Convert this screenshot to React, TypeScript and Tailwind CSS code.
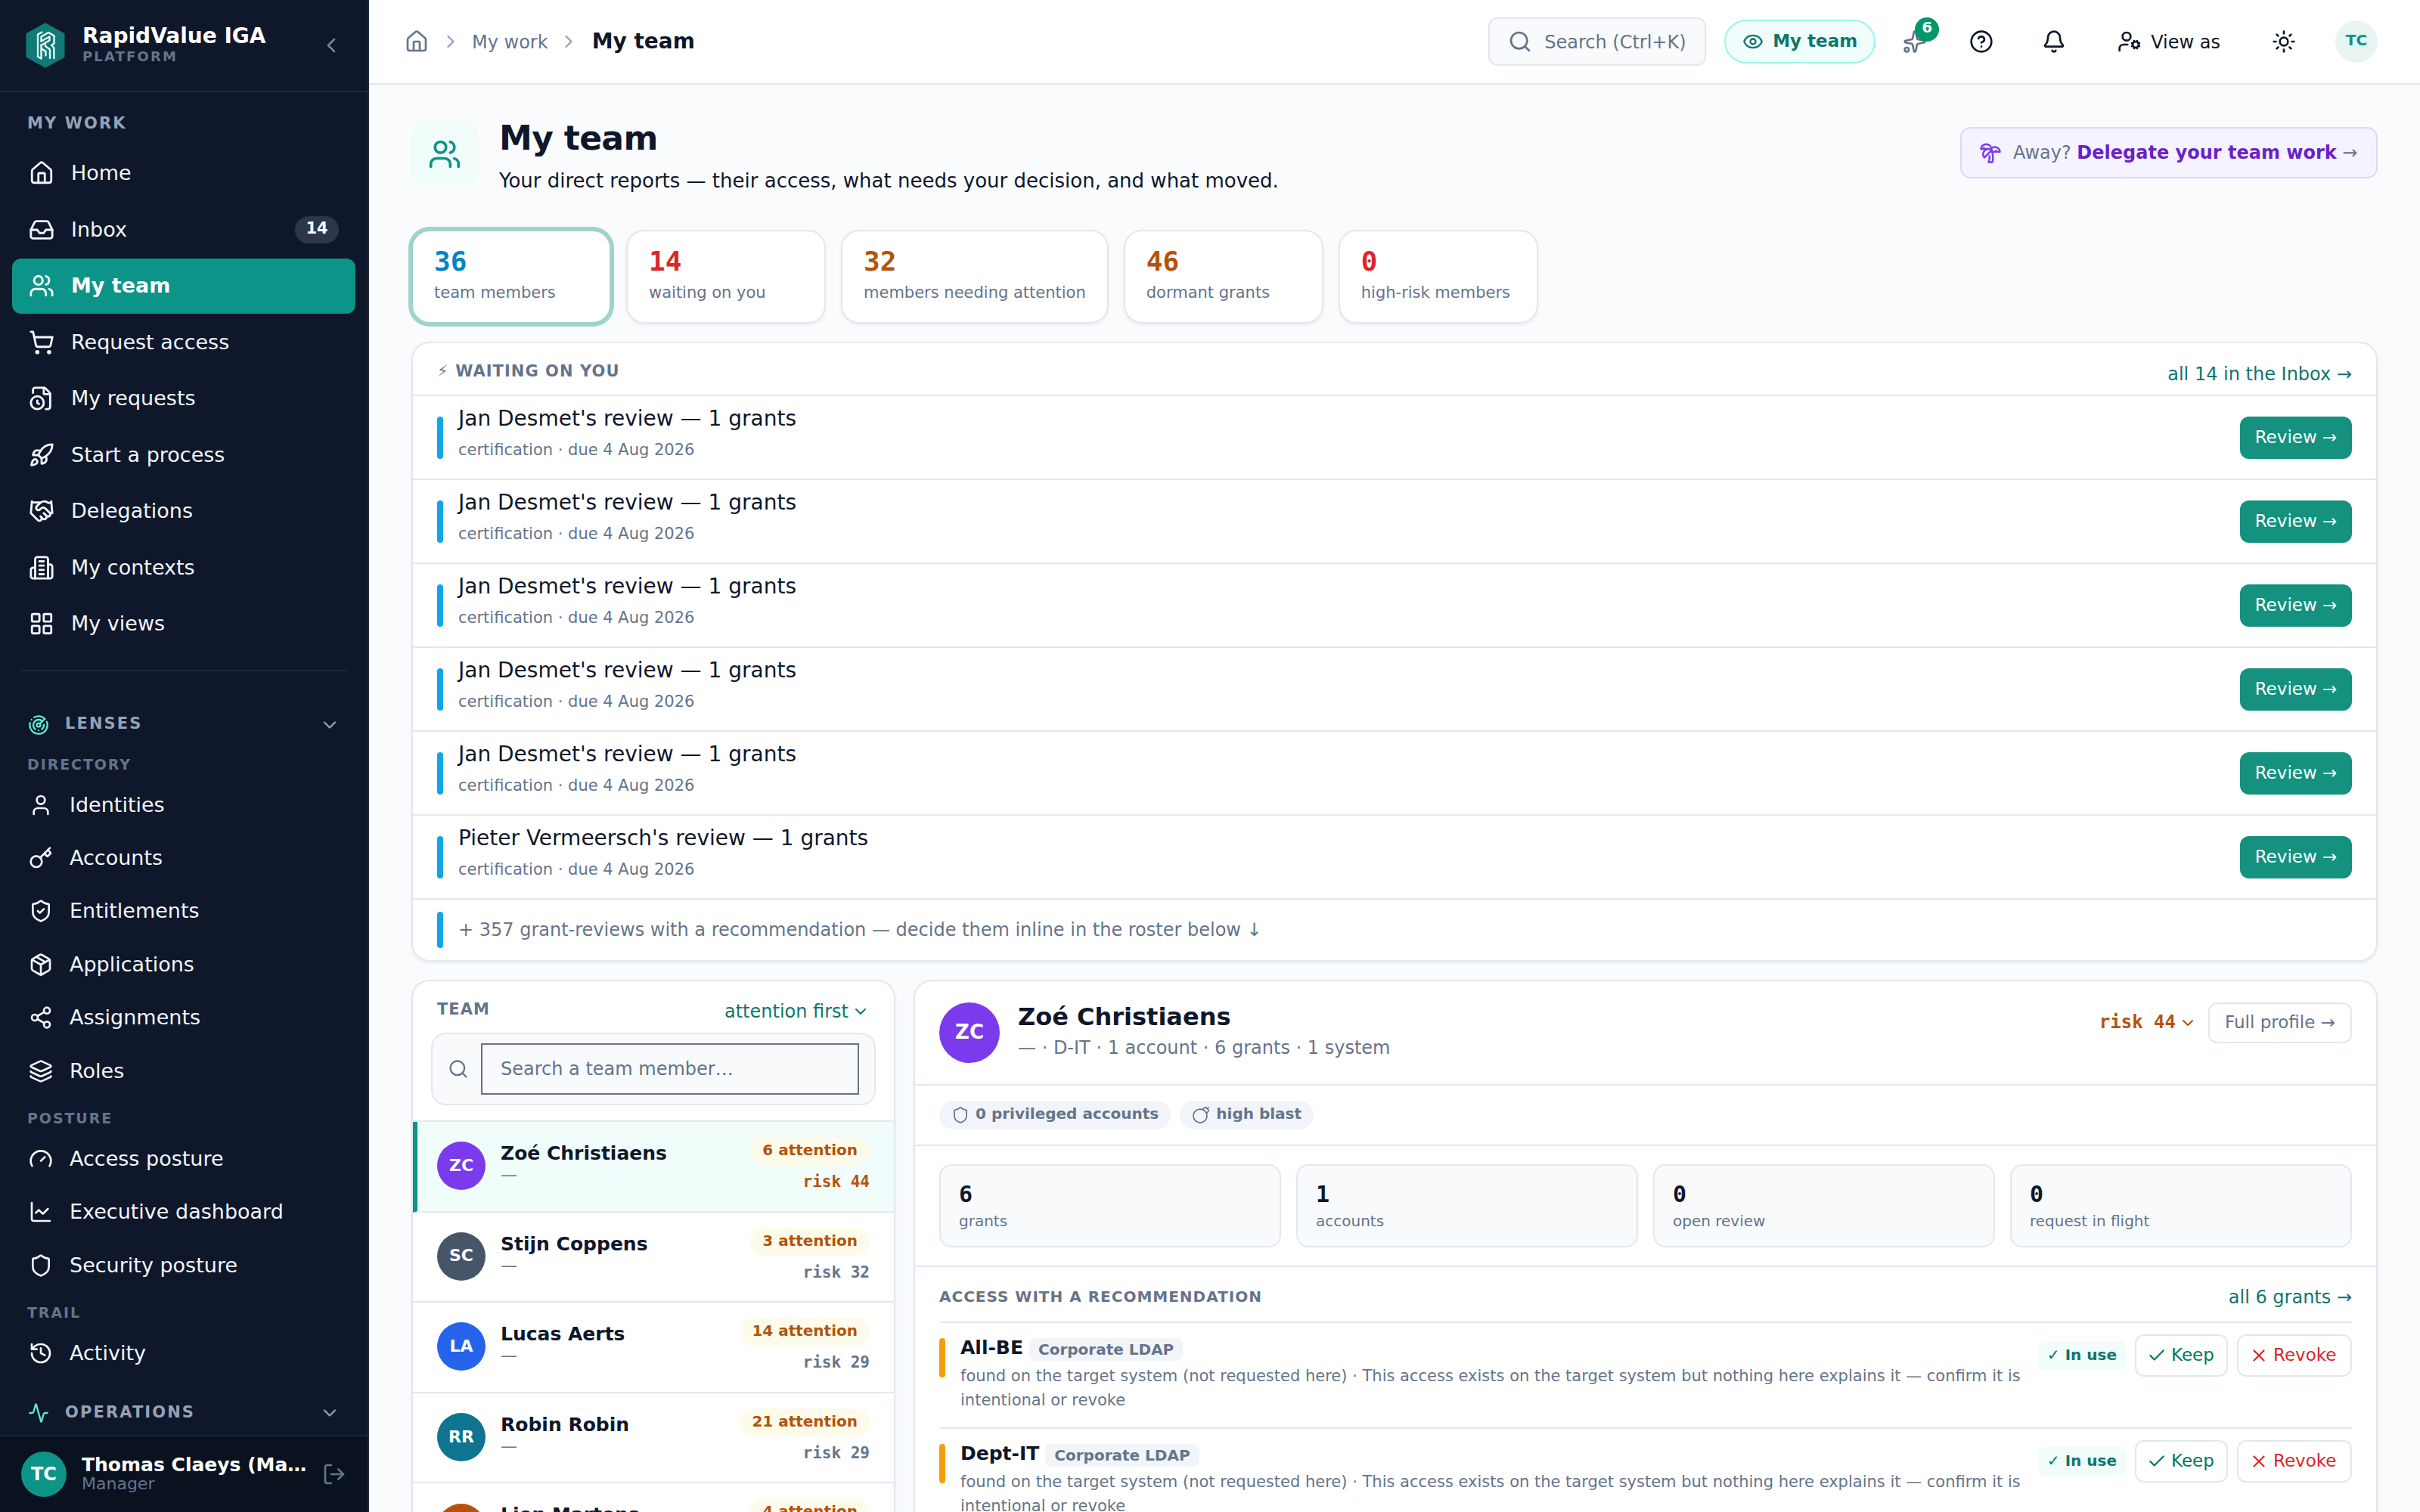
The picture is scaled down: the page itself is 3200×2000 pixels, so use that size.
import React from "react";
import {
  House, Inbox, Users, ShoppingCart, FileClock, Rocket, Handshake, LayoutGrid,
  Radar, User, Key, ShieldCheck, Package, Share2, Layers, Gauge, ChartLine, Shield, History,
  Activity, ChevronDown, ChevronLeft, ChevronRight, LogOut, Search, Eye, Sparkles, CircleHelp,
  Bell, UserCog, Sun, Bomb, Check, X, TreePalm,
} from "lucide-react";

type Icon = React.ComponentType<{ size?: number; strokeWidth?: number; className?: string }>;

function OfficeBuilding({ size = 24, strokeWidth = 2, className }: { size?: number; strokeWidth?: number; className?: string }) {
  return (
    <svg
      width={size}
      height={size}
      viewBox="0 0 24 24"
      fill="none"
      stroke="currentColor"
      strokeWidth={strokeWidth}
      strokeLinecap="round"
      strokeLinejoin="round"
      className={className}
    >
      <path d="M6 22V4a2 2 0 0 1 2-2h8a2 2 0 0 1 2 2v18Z" />
      <path d="M6 12H4a2 2 0 0 0-2 2v6a2 2 0 0 0 2 2h2" />
      <path d="M18 9h2a2 2 0 0 1 2 2v9a2 2 0 0 1-2 2h-2" />
      <path d="M10 6h4M10 10h4M10 14h4M10 18h4" />
    </svg>
  );
}

const workItems: { icon: Icon; label: string; badge?: string; active?: boolean }[] = [
  { icon: House, label: "Home" },
  { icon: Inbox, label: "Inbox", badge: "14" },
  { icon: Users, label: "My team", active: true },
  { icon: ShoppingCart, label: "Request access" },
  { icon: FileClock, label: "My requests" },
  { icon: Rocket, label: "Start a process" },
  { icon: Handshake, label: "Delegations" },
  { icon: OfficeBuilding, label: "My contexts" },
  { icon: LayoutGrid, label: "My views" },
];

const lensGroups: { title: string; items: { icon: Icon; label: string }[] }[] = [
  {
    title: "DIRECTORY",
    items: [
      { icon: User, label: "Identities" },
      { icon: Key, label: "Accounts" },
      { icon: ShieldCheck, label: "Entitlements" },
      { icon: Package, label: "Applications" },
      { icon: Share2, label: "Assignments" },
      { icon: Layers, label: "Roles" },
    ],
  },
  {
    title: "POSTURE",
    items: [
      { icon: Gauge, label: "Access posture" },
      { icon: ChartLine, label: "Executive dashboard" },
      { icon: Shield, label: "Security posture" },
    ],
  },
  { title: "TRAIL", items: [{ icon: History, label: "Activity" }] },
];

const stats = [
  { value: "36", label: "team members", color: "text-[#0284c7]", active: true },
  { value: "14", label: "waiting on you", color: "text-[#dc2626]" },
  { value: "32", label: "members needing attention", color: "text-[#b45309]" },
  { value: "46", label: "dormant grants", color: "text-[#b45309]" },
  { value: "0", label: "high-risk members", color: "text-[#dc2626]" },
];

const reviews = [
  "Jan Desmet's review — 1 grants",
  "Jan Desmet's review — 1 grants",
  "Jan Desmet's review — 1 grants",
  "Jan Desmet's review — 1 grants",
  "Jan Desmet's review — 1 grants",
  "Pieter Vermeersch's review — 1 grants",
];

const members = [
  { initials: "ZC", name: "Zoé Christiaens", attention: 6, risk: 44, bg: "bg-[#7c3aed]", active: true },
  { initials: "SC", name: "Stijn Coppens", attention: 3, risk: 32, bg: "bg-[#475569]" },
  { initials: "LA", name: "Lucas Aerts", attention: 14, risk: 29, bg: "bg-[#2563eb]" },
  { initials: "RR", name: "Robin Robin", attention: 21, risk: 29, bg: "bg-[#0e7490]" },
  { initials: "LM", name: "Lien Martens", attention: 4, risk: 28, bg: "bg-[#b45309]" },
];

const facts = [
  { value: "6", label: "grants" },
  { value: "1", label: "accounts" },
  { value: "0", label: "open review" },
  { value: "0", label: "request in flight" },
];

function Logo() {
  return (
    <svg viewBox="0 0 52 60" className="h-[60px] w-[52px] shrink-0" fill="none">
      <path
        d="M26 1.500 50.500 15V45L26 58.500 1.500 45V15Z"
        fill="#107a76"
        stroke="#107a76"
        strokeWidth="2"
        strokeLinejoin="round"
      />
      <g stroke="#f0fdfa" strokeWidth="2.300" strokeLinejoin="round" strokeLinecap="round">
        <path d="M21.500 12.500 16 15.500V45L20.500 47.500V29.500" />
        <path d="M20.500 24.500V18.500L30 13 37.500 17.300V27.500L34 30 37.300 33V47" />
        <path d="M20.500 24.500 31.500 18.500V23.500L20.500 29.800" />
        <path d="M26 27.500V31L32 35.500V47" />
        <path d="M21 34.500 26.500 38V43.500" />
      </g>
    </svg>
  );
}

function Sidebar() {
  return (
    <aside className="flex h-[2000px] w-[488px] shrink-0 flex-col border-r-2 border-[#1e293b] bg-[#0f172a] text-[#f1f5f9]">
      <div className="flex h-[122px] shrink-0 items-center border-b-2 border-[#222b3d] pl-[34px] pr-[32px]">
        <Logo />
        <div className="ml-[23px] flex-1 pb-[5px]">
          <div className="text-[28px] font-bold leading-[34px] text-white">RapidValue IGA</div>
          <div className="text-[18px] font-bold leading-[20px] tracking-[0.12em] text-[#64748b]">PLATFORM</div>
        </div>
        <ChevronLeft size={32} className="text-[#76829a]" />
      </div>

      <div className="flex min-h-0 flex-1 flex-col overflow-hidden">
        <div className="mt-[25px] pl-[36px] text-[21px] font-bold leading-[32px] tracking-[0.1em] text-[#94a3b8]">MY WORK</div>
        <nav className="mt-[14px] flex flex-col gap-[2px] px-4">
          {workItems.map(({ icon: I, label, badge, active }) => (
            <div
              key={label}
              className={
                active
                  ? "flex h-[72.500px] items-center rounded-[12px] bg-[#0d9488] pl-[22px] pr-[22px] font-bold text-white"
                  : "flex h-[72.500px] items-center rounded-[12px] pl-[22px] pr-[22px]"
              }
            >
              <I size={34} />
              <span className="ml-[22px] flex-1 text-[27px] leading-[40px]">{label}</span>
              {badge && (
                <span className="flex h-[36px] w-[58px] items-center justify-center rounded-full bg-[#2e364a] pb-[2px] text-[21px] font-bold text-white">
                  {badge}
                </span>
              )}
            </div>
          ))}
        </nav>
        <div className="ml-[28px] mr-[28px] mt-[24px] h-[2px] shrink-0 bg-[#222b3d]" />

        <div className="mt-[54px] flex h-[34px] shrink-0 items-center pl-[37px] pr-[36px]">
          <Radar size={28} className="text-[#5eead4]" />
          <span className="ml-[21px] flex-1 pb-[3px] text-[21px] font-bold leading-[32px] tracking-[0.1em] text-[#94a3b8]">LENSES</span>
          <ChevronDown size={28} className="text-[#94a3b8]" />
        </div>
        <div className="mt-[8px] shrink-0">
          {lensGroups.map((g) => (
            <div key={g.title}>
              <div className="h-[46px] pl-[36px] pt-[12px] text-[19px] font-bold leading-[30px] tracking-[0.1em] text-[#64748b]">{g.title}</div>
              <div className="flex flex-col">
                {g.items.map(({ icon: I, label }) => (
                  <div key={label} className="flex h-[70.400px] items-center pl-[38px]">
                    <I size={32} />
                    <span className="ml-[22px] text-[27px] leading-[40px]">{label}</span>
                  </div>
                ))}
              </div>
            </div>
          ))}
        </div>
        <div className="mt-[27px] flex h-[34px] shrink-0 items-center pl-[37px] pr-[36px]">
          <Activity size={28} className="text-[#5eead4]" />
          <span className="ml-[21px] flex-1 pb-[3px] text-[21px] font-bold leading-[32px] tracking-[0.1em] text-[#94a3b8]">OPERATIONS</span>
          <ChevronDown size={28} className="text-[#94a3b8]" />
        </div>
      </div>

      <div className="flex h-[102px] shrink-0 items-center border-t-2 border-[#1a2436] bg-[#0a121f] pl-[28px] pr-[28px]">
        <div className="flex size-[60px] items-center justify-center rounded-full bg-[#0d9488] pb-[1px] text-[24px] font-bold text-white">TC</div>
        <div className="ml-[20px] w-[304px] pb-[5px]">
          <div className="truncate text-[25px] font-bold leading-[31px] text-white">Thomas Claeys (Manager)</div>
          <div className="text-[22px] leading-[20px] text-[#64748b]">Manager</div>
        </div>
        <LogOut size={32} className="ml-auto text-[#64748b]" />
      </div>
    </aside>
  );
}

function TopBar() {
  return (
    <header className="flex h-[112px] shrink-0 items-center border-b-2 border-[#e2e8f0] bg-white pl-[47px] pr-[56px]">
      <House size={32} className="text-[#64748b]" />
      <ChevronRight size={28} className="ml-[15px] text-[#94a3b8]" />
      <span className="ml-[14px] pt-[1px] text-[24px] text-[#64748b]">My work</span>
      <ChevronRight size={28} className="ml-[13px] text-[#94a3b8]" />
      <span className="ml-[17px] text-[28px] font-bold">My team</span>

      <div className="ml-auto flex h-[64px] w-[288px] items-center rounded-[12px] border-2 border-[#e2e8f0] bg-[#f8fafc] pl-[24px] text-[24px] text-[#64748b]">
        <Search size={32} />
        <span className="ml-[16px] pt-[1px]">Search (Ctrl+K)</span>
      </div>
      <div className="ml-[24px] flex h-[58px] w-[200px] items-center rounded-full border-2 border-[#99f6e4] bg-[#f0fdfa] pl-[22px] text-[23px] font-bold text-[#0f766e]">
        <Eye size={28} />
        <span className="ml-[12px] pb-[2px]">My team</span>
      </div>
      <div className="relative ml-[36px]">
        <Sparkles size={32} className="text-[#64748b]" />
        <span className="absolute -right-[16px] -top-[16px] flex size-[32px] items-center justify-center rounded-full bg-[#059669] pb-[6px] text-[20px] font-bold leading-none text-white">6</span>
      </div>
      <CircleHelp size={32} className="ml-[56px]" />
      <Bell size={32} className="ml-[64px]" />
      <UserCog size={32} className="ml-[68px]" />
      <span className="ml-[12px] pt-[1px] text-[24px]">View as</span>
      <Sun size={32} className="ml-[68px]" />
      <span className="ml-[52px] flex size-[56px] items-center justify-center rounded-full bg-[#e7f4f2] pb-[4px] text-[20px] font-bold text-[#0d9488]">TC</span>
    </header>
  );
}

function PageHeader() {
  return (
    <div className="flex h-[88px] items-center">
      <div className="flex size-[88px] items-center justify-center rounded-[20px] bg-[#f0fdfa] text-[#0d9488]">
        <Users size={44} />
      </div>
      <div className="ml-[28px] pt-[8px]">
        <h1 className="text-[44px] font-bold leading-[54px] tracking-[-0.015em]">My team</h1>
        <p className="mt-[8px] text-[26px] leading-[42px]">Your direct reports — their access, what needs your decision, and what moved.</p>
      </div>
      <div className="mb-[4px] ml-auto flex h-[68px] w-[552px] items-center rounded-[14px] border-2 border-[#ddd6fe] bg-[#f5f3ff] pl-[23px] text-[24px] text-[#64748b]">
        <TreePalm size={30} className="text-[#7c3aed]" />
        <span className="ml-[15px] whitespace-nowrap">
          Away? <b className="text-[#6b21c8]">Delegate your team work</b> →
        </span>
      </div>
    </div>
  );
}

function StatCards() {
  return (
    <div className="mt-[56px] flex gap-5">
      {stats.map((s) => (
        <div
          key={s.label}
          className={
            s.active
              ? "h-[124px] min-w-[264px] rounded-[24px] border-2 border-[#9fd3cb] bg-white px-[28px] pt-[20px] ring-4 ring-[#9fd3cb]"
              : "h-[124px] min-w-[264px] rounded-[24px] border-2 border-[#e2e8f0] bg-white px-[28px] pt-[20px] shadow-[0_2px_4px_rgba(15,23,42,0.06)]"
          }
        >
          <div className={`font-[DejaVu_Sans_Mono] text-[36px] font-bold leading-[40px] ${s.color}`}>{s.value}</div>
          <div className="mt-[5px] text-[21px] leading-[32px] text-[#64748b]">{s.label}</div>
        </div>
      ))}
    </div>
  );
}

function WaitingPanel() {
  return (
    <section className="mt-[24px] h-[820px] overflow-hidden rounded-[24px] border-2 border-[#e2e8f0] bg-white shadow-[0_2px_4px_rgba(15,23,42,0.06)]">
      <div className="flex h-[68px] items-center justify-between px-[32px] pt-[8px]">
        <h2 className="text-[21px] font-bold tracking-[0.05em] text-[#64748b]">⚡ WAITING ON YOU</h2>
        <span className="pt-[5px] text-[24px] text-[#0f766e]">all 14 in the Inbox →</span>
      </div>
      {reviews.map((title, i) => (
        <div key={i} className="flex h-[111.080px] items-center border-t-2 border-[#e2e8f0] px-[32px]">
          <div className="h-[56px] w-[8px] rounded-[4px] bg-[#0ea5e9]" />
          <div className="ml-[20px] flex-1 self-start pt-[10px]">
            <div className="text-[28px] leading-[40px]">{title}</div>
            <div className="mt-[4px] text-[21px] leading-[34px] text-[#64748b]">certification · due 4 Aug 2026</div>
          </div>
          <button className="h-[56px] w-[148px] rounded-[12px] bg-[#14917f] pb-[1px] text-[23px] text-white">Review →</button>
        </div>
      ))}
      <div className="flex h-[82px] items-center border-t-2 border-[#e2e8f0] px-[32px]">
        <div className="h-[48px] w-[8px] rounded-[4px] bg-[#0ea5e9]" />
        <span className="ml-[20px] text-[24px] text-[#64748b]">
          + 357 grant-reviews with a recommendation — decide them inline in the roster below ↓
        </span>
      </div>
    </section>
  );
}

function TeamList() {
  return (
    <section className="w-[640px] shrink-0 rounded-t-[24px] border-2 border-b-0 border-[#e2e8f0] bg-white shadow-[0_2px_4px_rgba(15,23,42,0.06)]">
      <div className="flex h-[68px] items-center justify-between px-[32px] pt-[11px]">
        <h2 className="pb-[3px] text-[21px] font-bold tracking-[0.05em] text-[#64748b]">TEAM</h2>
        <span className="flex items-center gap-[4px] text-[24px] text-[#0f766e]">
          attention first <ChevronDown size={24} />
        </span>
      </div>
      <div className="mx-[24px] flex h-[96px] items-center rounded-[20px] border-2 border-[#e2e8f0] bg-[#f8fafc] pl-[20px]">
        <Search size={28} className="text-[#64748b]" />
        <div className="ml-[16px] flex h-[68px] w-[500px] items-center border-2 border-[#6b7280] px-[24px] text-[24px] text-[#64748b]">
          Search a team member…
        </div>
      </div>
      <div className="mt-[20px] border-t-2 border-[#e2e8f0]">
        {members.map((m) => (
          <div
            key={m.initials}
            className={
              m.active
                ? "flex h-[119.600px] items-center border-b-2 border-l-[6px] border-b-[#dfe9ee] border-l-[#0d9488] bg-[#f0fdfa] pl-[26px] pr-[32px]"
                : "flex h-[119.600px] items-center border-b-2 border-[#e2e8f0] px-[32px]"
            }
          >
            <div className={`mb-[1px] flex size-[64px] items-center justify-center rounded-full pb-[2px] text-[22px] font-bold text-white ${m.bg}`}>{m.initials}</div>
            <div className="ml-[20px] flex-1 self-start pt-[23px]">
              <div className="text-[25px] font-bold leading-[38px]">{m.name}</div>
              <div className="-mt-[8px] text-[22px] leading-[34px] text-[#64748b]">—</div>
            </div>
            <div className="flex flex-col items-end self-start pt-[20px]">
              <span className="flex h-[37px] items-center rounded-full bg-[#fffbeb] px-[16px] pb-[3px] text-[20px] font-bold text-[#b45309]">{m.attention} attention</span>
              <span
                className={
                  m.active
                    ? "mt-[6px] font-[DejaVu_Sans_Mono] text-[21px] font-bold leading-[32px] text-[#b45309]"
                    : "mt-[6px] font-[DejaVu_Sans_Mono] text-[21px] font-bold leading-[32px] text-[#64748b]"
                }
              >
                risk {m.risk}
              </span>
            </div>
          </div>
        ))}
      </div>
    </section>
  );
}

function GrantRow({ name }: { name: string }) {
  return (
    <div className="flex h-[140px] items-start border-t-2 border-[#e2e8f0]">
      <div className="mt-[20px] h-[52px] w-[8px] rounded-[4px] bg-[#f59e0b]" />
      <div className="ml-[20px] w-[1404px] pt-[14px]">
        <div className="flex h-[38px] items-center">
          <span className="text-[25px] font-bold leading-[38px]">{name}</span>
          <span className="ml-[8px] mt-[4px] flex h-[30px] items-center rounded-[8px] bg-[#f1f5f9] px-[12px] pb-[1px] text-[20px] font-bold text-[#64748b]">Corporate LDAP</span>
        </div>
        <p className="mt-[1.500px] text-[21px] leading-[32.500px] text-[#64748b]">
          found on the target system (not requested here) · This access exists on the target system but nothing here explains it — confirm it is intentional or revoke
        </p>
      </div>
      <div className="ml-auto flex shrink-0 items-center gap-[12px] pt-[15px]">
        <span className="flex h-[38px] w-[116px] items-center justify-center rounded-[8px] bg-[#f0fdfa] pb-[3px] text-[20px] font-bold text-[#0f766e]">✓ In use</span>
        <span className="flex h-[56px] w-[123px] items-center rounded-[12px] border-2 border-[#e2e8f0] pl-[14px] text-[23px] text-[#047857]">
          <Check size={26} className="mr-[6px]" />
          <span className="pb-[2px]">Keep</span>
        </span>
        <span className="flex h-[56px] w-[152px] items-center rounded-[12px] border-2 border-[#e2e8f0] pl-[14px] text-[23px] text-[#dc2626]">
          <X size={26} className="mr-[6px]" />
          <span className="pb-[2px]">Revoke</span>
        </span>
      </div>
    </div>
  );
}

function Detail() {
  return (
    <section className="min-w-0 flex-1 rounded-t-[24px] border-2 border-b-0 border-[#e2e8f0] bg-white shadow-[0_2px_4px_rgba(15,23,42,0.06)]">
      <div className="flex h-[138px] items-start border-b-2 border-[#e2e8f0] px-[32px] pt-[28px]">
        <div className="flex size-[80px] items-center justify-center rounded-full bg-[#7c3aed] pb-[2px] text-[26px] font-bold text-white">ZC</div>
        <div className="-mt-[3px] ml-[24px]">
          <div className="text-[32px] font-bold leading-[44px]">Zoé Christiaens</div>
          <div className="mt-[1px] text-[24px] leading-[36px] text-[#64748b]">— · D-IT · 1 account · 6 grants · 1 system</div>
        </div>
        <div className="ml-auto flex items-center">
          <span className="pb-[2px] font-[DejaVu_Sans_Mono] text-[24px] font-bold text-[#b45309]">risk 44</span>
          <ChevronDown size={24} className="ml-[4px] text-[#b45309]" />
          <span className="ml-[15px] flex h-[54px] w-[190px] items-center justify-center rounded-[12px] border-2 border-[#e2e8f0] pb-[1px] text-[23px] text-[#64748b]">Full profile →</span>
        </div>
      </div>
      <div className="flex h-[80px] items-center gap-[12px] border-b-2 border-[#e2e8f0] px-[32px] text-[20px] font-bold text-[#64748b]">
        <span className="flex h-[38px] items-center rounded-full bg-[#f1f5f9] px-[16px]">
          <Shield size={24} strokeWidth={1.75} className="mr-[8px]" />
          <span className="pb-[5px]">0 privileged accounts</span>
        </span>
        <span className="flex h-[38px] items-center rounded-full bg-[#f1f5f9] px-[16px]">
          <Bomb size={24} strokeWidth={1.75} className="mr-[8px]" />
          <span className="pb-[5px]">high blast</span>
        </span>
      </div>
      <div className="grid h-[160px] grid-cols-4 gap-5 border-b-2 border-[#e2e8f0] px-[32px] py-[24px]">
        {facts.map((f) => (
          <div key={f.label} className="rounded-[16px] border-2 border-[#e2e8f0] bg-[#f8fafc] px-[24px] pt-[19px]">
            <div className="font-[DejaVu_Sans_Mono] text-[30px] font-bold leading-[38px]">{f.value}</div>
            <div className="mt-[1px] text-[20px] leading-[31px] text-[#64748b]">{f.label}</div>
          </div>
        ))}
      </div>
      <div className="px-[32px]">
        <div className="flex h-[72px] items-center justify-between pt-[6px]">
          <h3 className="text-[20px] font-bold tracking-[0.05em] text-[#64748b]">ACCESS WITH A RECOMMENDATION</h3>
          <span className="pt-[1px] text-[24px] text-[#0f766e]">all 6 grants →</span>
        </div>
        <GrantRow name="All-BE" />
        <GrantRow name="Dept-IT" />
      </div>
    </section>
  );
}

export default function App() {
  return (
    <div className="flex h-[2000px] w-[3200px] overflow-hidden bg-[#fafbfd] font-['DejaVu_Sans',sans-serif] text-[#0f172a]">
      <Sidebar />
      <div className="flex min-w-0 flex-1 flex-col">
        <TopBar />
        <main className="min-h-0 flex-1 overflow-hidden px-[56px] pt-[48px]">
          <PageHeader />
          <StatCards />
          <WaitingPanel />
          <div className="mt-[24px] flex h-[720px] gap-6">
            <TeamList />
            <Detail />
          </div>
        </main>
      </div>
    </div>
  );
}
